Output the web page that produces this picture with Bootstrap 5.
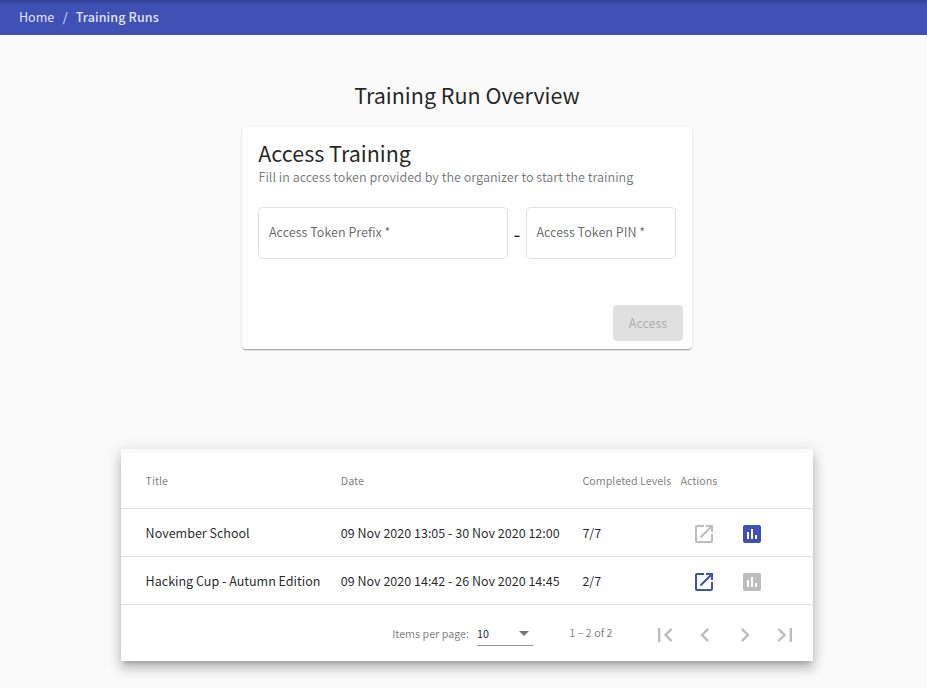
<!DOCTYPE html>
<html lang="en">
<head>
<meta charset="utf-8">
<meta name="viewport" content="width=device-width, initial-scale=1">
<title>Training Run Overview</title>
<link rel="stylesheet" href="https://cdn.jsdelivr.net/npm/bootstrap@5.3.0/dist/css/bootstrap.min.css">
<style>
  body { background: #fafafa; color: rgba(0,0,0,.87); font: 400 12.53px/20px "Noto Sans CJK SC", "Noto Sans CJK JP", sans-serif; height: 688px; overflow: hidden; }
  .crumb-bar { height: 35px; padding: 0 0 2px 19px; background: #3f51b5; box-shadow: inset 0 5px 5px -4px rgba(0,0,0,.3); color: rgba(255,255,255,.87); }
  .crumb-bar a { color: inherit; }
  .crumb-bar .slash { padding: 0 8px 0 8.5px; }
  .crumb-bar .current { font-weight: 500; letter-spacing: .12px; }
  .page-title { font-size: 21.5px; line-height: 32px; margin: 44px 0 16px 7px; font-weight: 400; }
  .access-card { width: 450px; height: 222px; margin-left: 242px; padding: 16px; border: 0; border-radius: 4px; color: inherit;
    box-shadow: 0 2px 1px -1px rgba(0,0,0,.2), 0 1px 1px 0 rgba(0,0,0,.14), 0 1px 3px 0 rgba(0,0,0,.12); }
  .access-card h2 { font-size: 21.5px; line-height: 24px; margin: -2px 0 2px .3px; font-weight: 400; }
  .hint { color: rgba(0,0,0,.54); line-height: 20px; padding-left: .5px; }
  .token { height: 52px; padding: 0 10px 3px; border: 1px solid #e0e0e0; border-radius: 5px; background: #fff; font-size: 12.53px; }
  .token::placeholder { color: rgba(0,0,0,.6); opacity: 1; }
  .token-prefix { width: 250px; }
  .token-pin { width: 150px; padding-left: 9.4px; }
  .dash { width: 18px; padding-top: 2px; text-align: center; font-size: 20px; }
  .access-actions { margin: 0 -7px -8px 0; }
  .access-btn { width: 70px; height: 36px; border: 0; border-radius: 4px; font-size: 12.53px; }
  .access-btn:disabled { background: #e0e0e0; color: rgba(0,0,0,.26); opacity: 1; }
  .runs { width: 692px; margin: 100px 0 0 121px; border-top: 4px solid #fafafa; background: #fff;
    box-shadow: 0 5px 5px -3px rgba(0,0,0,.2), 0 8px 10px 1px rgba(0,0,0,.14), 0 3px 14px 2px rgba(0,0,0,.12); }
  .runs-table { table-layout: fixed; border-collapse: separate; border-spacing: 0; --bs-table-bg: #fff; border-color: #e0e0e0; }
  .runs-table > :not(caption) > * > * { padding: 0; height: 48px; color: rgba(0,0,0,.87); }
  .runs-table > tbody > tr > :last-child { padding-top: 2px; }
  .runs-table > thead > tr > th { height: 56px; padding-top: 1px; font-size: 10.74px; font-weight: 400; vertical-align: middle; white-space: nowrap; color: rgba(0,0,0,.54); }
  .runs-table > :not(caption) > * > :first-child { padding-left: 24.6px; }
  .c-title { width: 219.8px; } .c-date { width: 241.6px; } .c-levels { width: 98px; }
  .run-actions { margin-left: -.7px; }
  .icon-btn { width: 48px; height: 40px; border: 0; color: #3f51b5; }
  .icon-btn:disabled { color: rgba(0,0,0,.26); border: 0; opacity: 1; }
  .icon-btn svg, .page-btn svg { fill: currentColor; display: block; }
  .pager { height: 56px; padding: 3px 8px 0 0; font-size: 10.74px; color: rgba(0,0,0,.54); }
  .size-label { padding-bottom: 2px; }
  .page-size { width: 56px; height: 24px; margin: 0 36px 2px 8px; padding: 1px 4px 0 0; border-bottom: 1px solid #949494; color: rgba(0,0,0,.87); }
  .arrow { border: 5px solid transparent; border-top-color: rgba(0,0,0,.54); border-bottom: 0; }
  .range { width: 76px; padding: 0 0 4px .3px; }
  .page-btn, .page-btn:disabled { width: 40px; height: 40px; border: 0; color: rgba(0,0,0,.26); opacity: 1; }
</style>
<script src="https://cdn.jsdelivr.net/npm/bootstrap@5.3.0/dist/js/bootstrap.bundle.min.js"></script>
</head>
<body>
<nav class="crumb-bar d-flex align-items-center" aria-label="breadcrumb">
  <a href="#" class="text-decoration-none">Home</a><span class="slash">/</span><span class="current">Training Runs</span>
</nav>
<main>
  <h1 class="page-title text-center">Training Run Overview</h1>
  <section class="card access-card">
    <h2>Access Training</h2>
    <div class="hint">Fill in access token provided by the organizer to start the training</div>
    <form class="d-flex flex-column flex-grow-1 justify-content-between">
      <div class="d-flex align-items-center mt-3 pt-1">
        <input class="form-control token token-prefix" placeholder="Access Token Prefix *" aria-label="Access Token Prefix">
        <span class="dash">-</span>
        <input class="form-control token token-pin" placeholder="Access Token PIN *" aria-label="Access Token PIN">
      </div>
      <div class="d-flex justify-content-end access-actions"><button class="btn access-btn p-0" type="button" disabled>Access</button></div>
    </form>
  </section>
  <section class="runs">
    <table class="table runs-table align-middle mb-0">
      <colgroup><col class="c-title"><col class="c-date"><col class="c-levels"><col></colgroup>
      <thead><tr><th>Title</th><th>Date</th><th>Completed Levels</th><th>Actions</th></tr></thead>
      <tbody>
        <tr><td>November School</td><td>09 Nov 2020 13:05 - 30 Nov 2020 12:00</td><td>7/7</td>
          <td><div class="d-flex run-actions">
            <button class="btn icon-btn p-0 d-flex align-items-center justify-content-center" disabled aria-label="Open"><svg width="24" height="24" viewBox="0 0 24 24"><path d="M19 19H5V5h7V3H5c-1.11 0-2 .9-2 2v14c0 1.1.89 2 2 2h14c1.1 0 2-.9 2-2v-7h-2v7zM14 3v2h3.59l-9.83 9.83 1.41 1.41L19 6.41V10h2V3h-7z"/></svg></button>
            <button class="btn icon-btn p-0 d-flex align-items-center justify-content-center" aria-label="Results"><svg width="24" height="24" viewBox="0 0 24 24"><path d="M19 3H5c-1.1 0-2 .9-2 2v14c0 1.1.9 2 2 2h14c1.1 0 2-.9 2-2V5c0-1.1-.9-2-2-2zM9 17H7v-7h2v7zm4 0h-2V7h2v10zm4 0h-2v-4h2v4z"/></svg></button>
          </div></td></tr>
        <tr><td>Hacking Cup - Autumn Edition</td><td>09 Nov 2020 14:42 - 26 Nov 2020 14:45</td><td>2/7</td>
          <td><div class="d-flex run-actions">
            <button class="btn icon-btn p-0 d-flex align-items-center justify-content-center" aria-label="Open"><svg width="24" height="24" viewBox="0 0 24 24"><path d="M19 19H5V5h7V3H5c-1.11 0-2 .9-2 2v14c0 1.1.89 2 2 2h14c1.1 0 2-.9 2-2v-7h-2v7zM14 3v2h3.59l-9.83 9.83 1.41 1.41L19 6.41V10h2V3h-7z"/></svg></button>
            <button class="btn icon-btn p-0 d-flex align-items-center justify-content-center" disabled aria-label="Results"><svg width="24" height="24" viewBox="0 0 24 24"><path d="M19 3H5c-1.1 0-2 .9-2 2v14c0 1.1.9 2 2 2h14c1.1 0 2-.9 2-2V5c0-1.1-.9-2-2-2zM9 17H7v-7h2v7zm4 0h-2V7h2v10zm4 0h-2v-4h2v4z"/></svg></button>
          </div></td></tr>
      </tbody>
    </table>
    <div class="pager d-flex align-items-center justify-content-end">
      <span class="size-label">Items per page:</span>
      <div class="page-size d-flex align-items-center justify-content-between"><span>10</span><span class="arrow"></span></div>
      <span class="range">1 – 2 of 2</span>
      <button class="btn page-btn p-0 d-flex align-items-center justify-content-center" disabled aria-label="First page"><svg width="28" height="28" viewBox="0 0 24 24"><path d="M18.41 16.59L13.82 12l4.59-4.59L17 6l-6 6 6 6zM6 6h2v12H6z"/></svg></button>
      <button class="btn page-btn p-0 d-flex align-items-center justify-content-center" disabled aria-label="Previous page"><svg width="28" height="28" viewBox="0 0 24 24"><path d="M15.41 7.41L14 6l-6 6 6 6 1.41-1.41L10.83 12z"/></svg></button>
      <button class="btn page-btn p-0 d-flex align-items-center justify-content-center" disabled aria-label="Next page"><svg width="28" height="28" viewBox="0 0 24 24"><path d="M10 6L8.59 7.41 13.17 12l-4.58 4.59L10 18l6-6z"/></svg></button>
      <button class="btn page-btn p-0 d-flex align-items-center justify-content-center" disabled aria-label="Last page"><svg width="28" height="28" viewBox="0 0 24 24"><path d="M5.59 7.41L10.18 12l-4.59 4.59L7 18l6-6-6-6zM16 6h2v12h-2z"/></svg></button>
    </div>
  </section>
</main>
</body>
</html>
